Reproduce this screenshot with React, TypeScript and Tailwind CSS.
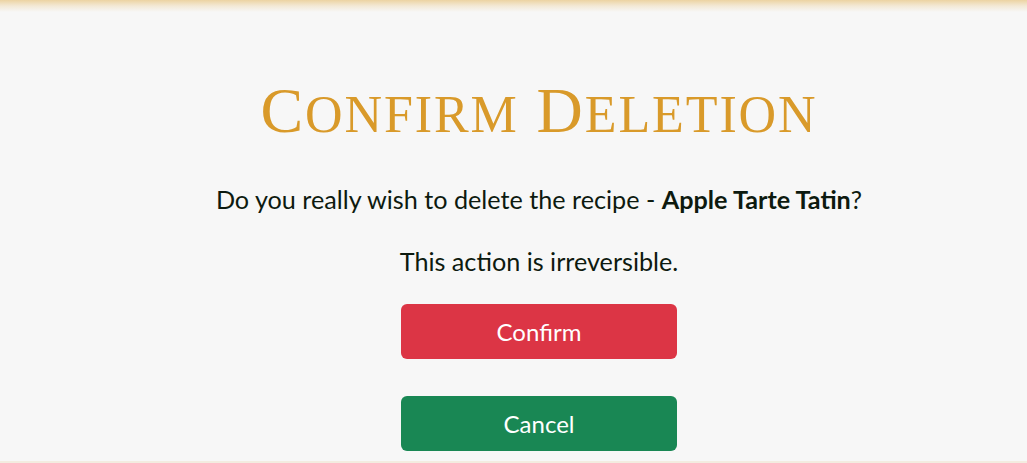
export default function App() {
  return (
    <div className="flex h-[463px] flex-col overflow-hidden bg-[#f7f7f7] font-['Lato','Noto_Sans',sans-serif]">
      <div className="h-[12px] w-full bg-gradient-to-b from-[#ecd3a2] via-[#f3e9d6] to-[#f7f7f7]" />
      <main className="flex flex-1 flex-col items-center pl-[51px]">
        <h1 className="mt-[67px] font-['Liberation_Serif','DejaVu_Serif',serif] text-[64px] leading-[64px] tracking-[1.9px] text-[#d99a2a] uppercase">
          C<span className="text-[52px]">onfirm</span> D<span className="text-[52px]">eletion</span>
        </h1>
        <p className="mt-[37px] text-[25.2px] leading-[30px] text-[#0d1a0f]">
          Do you really wish to delete the recipe - <strong className="font-bold">Apple Tarte Tatin</strong>?
        </p>
        <p className="mt-[32px] text-[25.2px] leading-[30px] text-[#0d1a0f]">This action is irreversible.</p>
        <button className="mt-[28px] h-[55px] w-[276px] rounded-[6px] bg-[#dc3545] text-[24px] text-white">
          Confirm
        </button>
        <button className="mt-[37px] h-[55px] w-[276px] rounded-[6px] bg-[#198754] text-[24px] text-white">
          Cancel
        </button>
      </main>
      <div className="h-[2px] w-full bg-[#f3ece0]" />
    </div>
  );
}
